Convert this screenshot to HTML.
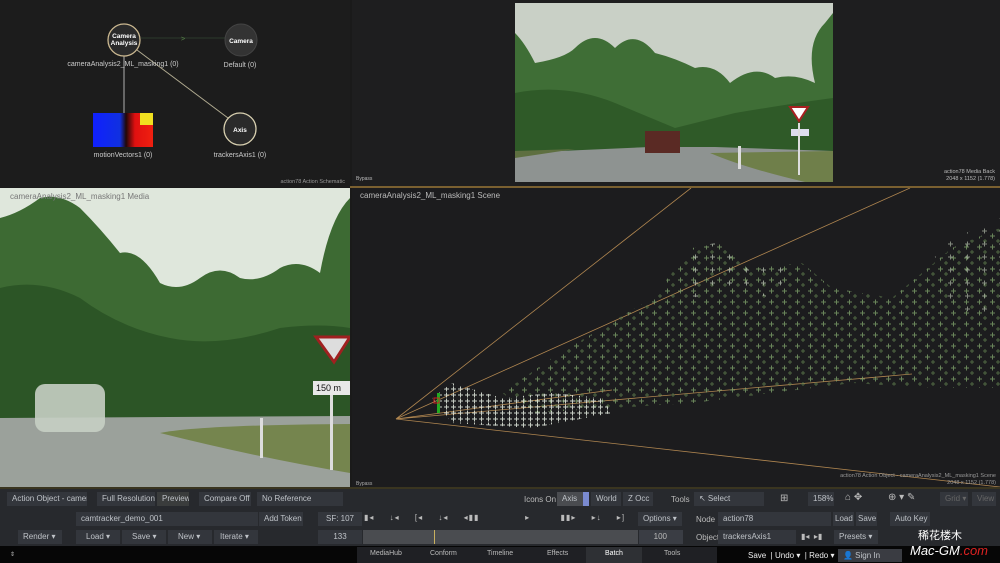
<!DOCTYPE html>
<html><head><meta charset="utf-8"><style>
*{margin:0;padding:0;box-sizing:border-box}
body{width:1000px;height:563px;background:#1a1a1a;overflow:hidden;position:relative;font-family:"Liberation Sans",sans-serif;font-size:8px;color:#c8c8c8}
.a{position:absolute}
.btn{position:absolute;background:#33363c;color:#bfc3c8;font-size:8px;line-height:14px;height:14px;padding-left:5px;white-space:nowrap;overflow:hidden}
.lbl{position:absolute;color:#bbb;font-size:8px;white-space:nowrap}
</style></head><body>
<!-- schematic -->
<div class="a" style="left:0;top:0;width:350px;height:187px;background:#1c1c1c"></div>
<svg class="a" style="left:0;top:0" width="350" height="187">
<line x1="141" y1="38" x2="225" y2="38" stroke="#2c3a2c" stroke-width="1"/>
<text x="181" y="41" fill="#5a8a4a" font-size="7" font-family="Liberation Sans">&gt;</text>
<line x1="124" y1="55" x2="124" y2="113" stroke="#999" stroke-width="1.2"/>
<line x1="137" y1="50" x2="228" y2="118" stroke="#b0aa90" stroke-width="1"/>
<circle cx="124" cy="40" r="16" fill="#2a2a2a" stroke="#cbb890" stroke-width="1.3"/>
<text x="124" y="38" fill="#fff" font-size="6.5" font-weight="bold" text-anchor="middle" font-family="Liberation Sans">Camera</text>
<text x="124" y="45" fill="#fff" font-size="6.5" font-weight="bold" text-anchor="middle" font-family="Liberation Sans">Analysis</text>
<circle cx="241" cy="40" r="16" fill="#333" stroke="#444" stroke-width="1"/>
<text x="241" y="43" fill="#fff" font-size="6.5" font-weight="bold" text-anchor="middle" font-family="Liberation Sans">Camera</text>
<circle cx="240" cy="129" r="16" fill="#2a2a2a" stroke="#d8d0b0" stroke-width="1.3"/>
<text x="240" y="132" fill="#fff" font-size="6.5" font-weight="bold" text-anchor="middle" font-family="Liberation Sans">Axis</text>
<defs><linearGradient id="mv" x1="0" x2="1"><stop offset="0" stop-color="#1020ff"/><stop offset=".45" stop-color="#1030e0"/><stop offset=".55" stop-color="#200808"/><stop offset=".7" stop-color="#e01010"/><stop offset="1" stop-color="#f02010"/></linearGradient></defs>
<rect x="93" y="113" width="60" height="34" fill="url(#mv)"/>
<rect x="140" y="113" width="13" height="12" fill="#f0e020"/>
<text x="123" y="66" fill="#ccc" font-size="7" text-anchor="middle" font-family="Liberation Sans">cameraAnalysis2_ML_masking1 (0)</text>
<text x="240" y="67" fill="#ccc" font-size="7" text-anchor="middle" font-family="Liberation Sans">Default (0)</text>
<text x="123" y="157" fill="#ccc" font-size="7" text-anchor="middle" font-family="Liberation Sans">motionVectors1 (0)</text>
<text x="240" y="157" fill="#ccc" font-size="7" text-anchor="middle" font-family="Liberation Sans">trackersAxis1 (0)</text>
<text x="345" y="183" fill="#999" font-size="5.5" text-anchor="end" font-family="Liberation Sans">action78 Action Schematic</text>
</svg>
<!-- top right -->
<div class="a" style="left:352px;top:0;width:648px;height:187px;background:#1e1e1f"></div>
<svg class="a" style="left:515px;top:3px" width="318" height="179">
<rect width="318" height="179" fill="#c9d0c6"/>
<path d="M0 30 Q10 40 20 60 Q50 55 60 45 Q80 25 100 45 Q120 25 140 50 Q160 55 180 65 Q200 60 215 80 Q240 60 260 75 Q280 70 300 80 Q290 40 310 20 L318 10 L318 150 L0 150Z" fill="#3f6e36"/>
<path d="M0 90 Q50 80 100 100 L160 125 L220 110 Q280 100 318 95 L318 150 L0 150Z" fill="#2f5a28"/>
<path d="M0 150 L135 144 L200 144 L318 148 L318 179 L0 179Z" fill="#8e9391"/>
<path d="M195 150 L318 148 L318 179 L290 179 Q230 165 195 150Z" fill="#6f7f4a"/>
<path d="M0 148 L60 146 L0 155Z" fill="#5e6f40"/>
<rect x="130" y="128" width="35" height="22" fill="#5a2a24"/>
<polygon points="275,104 293,104 284,118" fill="#fff" stroke="#a82020" stroke-width="2"/>
<rect x="276" y="126" width="18" height="7" fill="#dde"/>
<rect x="283" y="120" width="2" height="52" fill="#ddd"/>
<rect x="223" y="143" width="3" height="23" fill="#ddd"/>
</svg>
<div class="lbl" style="left:356px;top:176px;font-size:5px">Bypass</div>
<div class="lbl" style="right:5px;top:169px;font-size:5.5px;text-align:right;line-height:7px">action78 Media Back<br>2048 x 1152 (1.778)</div>
<!-- bottom left media -->
<svg class="a" style="left:0;top:188px" width="350" height="299">
<rect width="350" height="299" fill="#dfe7dc"/>
<path d="M0 30 Q20 25 40 10 Q60 5 80 20 Q100 40 120 65 Q140 60 160 95 Q180 105 200 90 Q220 75 240 90 Q260 95 280 80 Q300 70 320 85 Q330 30 350 10 L350 235 L0 235Z" fill="#3d6a33"/>
<path d="M0 100 Q40 90 80 110 Q120 140 170 150 Q220 160 280 140 Q320 135 350 140 L350 235 L0 235Z" fill="#2c5526"/>
<path d="M0 230 L350 228 L350 299 L0 299Z" fill="#9ba19b"/>
<path d="M160 245 Q200 237 350 236 L350 285 Q260 270 160 245Z" fill="#75854e"/>
<rect x="35" y="196" width="70" height="48" rx="10" fill="#c6cfc4" opacity=".9"/>
<polygon points="316,149 350,149 334,174" fill="#ddd" stroke="#a02020" stroke-width="3"/>
<rect x="313" y="193" width="37" height="14" fill="#e8e8e8"/>
<text x="316" y="203" font-size="9" font-family="Liberation Sans" fill="#111">150 m</text>
<rect x="330" y="207" width="3" height="75" fill="#ddd"/>
<rect x="260" y="230" width="3" height="40" fill="#ddd"/>
</svg>
<div class="lbl" style="left:10px;top:192px;font-size:8px;color:#777">cameraAnalysis2_ML_masking1 Media</div>
<!-- scene -->
<div class="a" style="left:352px;top:188px;width:648px;height:299px;background:#1c1c1e"></div>
<svg class="a" style="left:352px;top:188px" width="648" height="299">
<defs>
<pattern id="pc" width="13" height="11" patternUnits="userSpaceOnUse"><path d="M1 4h5M3.5 1.5v5" stroke="#7ea06a" stroke-width="1"/><path d="M7 9h4M9 7v4" stroke="#5d7a4c" stroke-width="1"/></pattern>
<pattern id="pb" width="17" height="13" patternUnits="userSpaceOnUse"><path d="M1 4h5M3.5 1.5v5" stroke="#c8d4c0" stroke-width="1"/></pattern>
<pattern id="pw" width="7" height="6" patternUnits="userSpaceOnUse"><path d="M1 3h5M3.5 0.5v5" stroke="#e8efe4" stroke-width="1"/></pattern>
</defs>
<path d="M44 231 L339 0 M44 231 L558 0 M44 231 L560 186 M44 231 L260 202 M44 231 L648 299" stroke="#b08650" stroke-width="0.8" fill="none"/>
<path d="M150 205 L200 170 L300 110 L340 60 L370 55 L400 80 L450 75 L480 100 L540 110 L600 60 L648 40 L648 200 L580 200 L500 195 L420 205 L340 215 L260 220 L180 225Z" fill="url(#pc)" opacity=".8"/>
<path d="M330 90 L345 58 L365 55 L400 78 L440 80 L420 110 L380 100 L340 110Z" fill="url(#pb)" opacity=".7"/>
<path d="M580 60 L648 30 L648 130 L600 120Z" fill="url(#pb)" opacity=".6"/>
<path d="M80 210 L100 195 L150 210 L200 205 L250 210 L260 225 L180 240 L100 235Z" fill="url(#pw)" opacity=".85"/>
<rect x="85" y="205" width="3" height="20" fill="#2a2"/>
<rect x="82" y="210" width="5" height="5" fill="none" stroke="#c22"/>
<text x="8" y="10" fill="#bbb" font-size="8" font-family="Liberation Sans">cameraAnalysis2_ML_masking1 Scene</text>
<text x="4" y="297" fill="#aaa" font-size="5" font-family="Liberation Sans">Bypass</text>
<text x="644" y="289" fill="#999" font-size="5.5" text-anchor="end" font-family="Liberation Sans">action78 Action Object - cameraAnalysis2_ML_masking1 Scene</text>
<text x="644" y="296" fill="#999" font-size="5.5" text-anchor="end" font-family="Liberation Sans">2048 x 1152 (1.778)</text>
</svg>
<div class="a" style="left:350px;top:186px;width:650px;height:2px;background:#7a6030"></div>
<!-- toolbar -->
<div class="a" style="left:0;top:489px;width:1000px;height:57px;background:#27292d"></div>
<div class="a" style="left:0;top:487px;width:1000px;height:2px;background:#3a3520"></div>
<div class="btn" style="left:7px;top:492px;width:80px">Action Object - cameraA</div>
<div class="btn" style="left:97px;top:492px;width:58px">Full Resolution</div>
<div class="btn" style="left:157px;top:492px;width:32px;background:#3a3c3c">Preview</div>
<div class="btn" style="left:199px;top:492px;width:52px">Compare Off</div>
<div class="btn" style="left:257px;top:492px;width:86px">No Reference</div>
<div class="lbl" style="left:524px;top:495px">Icons On</div>
<div class="btn" style="left:557px;top:492px;width:32px;background:#4a4c50">Axis</div>
<div class="a" style="left:583px;top:492px;width:6px;height:14px;background:#7a8ad0"></div>
<div class="btn" style="left:591px;top:492px;width:30px">World</div>
<div class="btn" style="left:623px;top:492px;width:30px">Z Occ</div>
<div class="lbl" style="left:671px;top:495px">Tools</div>
<div class="btn" style="left:694px;top:492px;width:70px">↖ Select</div>
<div class="lbl" style="left:780px;top:493px;font-size:10px">⊞</div>
<div class="btn" style="left:808px;top:492px;width:26px">158%</div>
<div class="lbl" style="left:845px;top:492px;font-size:10px">⌂ ✥</div>
<div class="lbl" style="left:888px;top:492px;font-size:10px">⊕ ▾ ✎</div>
<div class="btn" style="left:940px;top:492px;width:28px;color:#666">Grid ▾</div>
<div class="btn" style="left:972px;top:492px;width:24px;color:#666">View</div>
<div class="btn" style="left:76px;top:512px;width:182px">camtracker_demo_001</div>
<div class="btn" style="left:259px;top:512px;width:44px">Add Token ▾</div>
<div class="btn" style="left:18px;top:530px;width:44px">Render ▾</div>
<div class="btn" style="left:76px;top:530px;width:44px;padding-left:10px">Load ▾</div>
<div class="btn" style="left:122px;top:530px;width:44px;padding-left:10px">Save ▾</div>
<div class="btn" style="left:168px;top:530px;width:44px;padding-left:10px">New ▾</div>
<div class="btn" style="left:214px;top:530px;width:44px;padding-left:6px">Iterate ▾</div>
<div class="btn" style="left:318px;top:512px;width:44px;text-align:center;padding:0">SF: 107</div>
<div class="btn" style="left:318px;top:530px;width:44px;text-align:center;padding:0">133</div>
<div class="a" style="left:363px;top:530px;width:275px;height:14px;background:#4a4c50"></div>
<div class="a" style="left:434px;top:530px;width:1px;height:14px;background:#c8b060"></div>
<div class="a" style="left:639px;top:530px;width:44px;height:14px;background:#3a3d44;color:#bbb;text-align:right;padding-right:16px;line-height:14px">100</div>
<div class="lbl" style="left:364px;top:513px;font-size:8px;letter-spacing:1px;word-spacing:12px">▮◂ ↓◂ [◂ ↓◂ ◂▮▮ &nbsp;&nbsp;▸ &nbsp;▮▮▸ ▸↓ ▸] ▸↓ ▸▮▮</div>
<div class="btn" style="left:638px;top:512px;width:44px">Options ▾</div>
<div class="lbl" style="left:696px;top:515px">Node</div>
<div class="btn" style="left:718px;top:512px;width:113px">action78</div>
<div class="btn" style="left:833px;top:512px;width:21px;padding-left:2px">Load</div>
<div class="btn" style="left:856px;top:512px;width:21px;padding-left:2px">Save</div>
<div class="btn" style="left:890px;top:512px;width:40px">Auto Key</div>
<div class="lbl" style="left:696px;top:533px">Object</div>
<div class="btn" style="left:718px;top:530px;width:78px">trackersAxis1</div>
<div class="lbl" style="left:801px;top:532px">▮◂ &nbsp;▸▮</div>
<div class="btn" style="left:834px;top:530px;width:44px">Presets ▾</div>
<!-- bottom bar -->
<div class="a" style="left:0;top:546px;width:1000px;height:17px;background:#060606"></div>
<div class="lbl" style="left:10px;top:551px;font-size:6px">⇕</div>
<div class="a" style="left:357px;top:547px;width:360px;height:16px;background:#1f2024"></div>
<div class="lbl" style="left:370px;top:550px;font-size:7px">MediaHub</div>
<div class="lbl" style="left:430px;top:550px;font-size:7px">Conform</div>
<div class="lbl" style="left:487px;top:550px;font-size:7px">Timeline</div>
<div class="lbl" style="left:547px;top:550px;font-size:7px">Effects</div>
<div class="a" style="left:586px;top:547px;width:56px;height:16px;background:#2e3034"></div>
<div class="lbl" style="left:605px;top:550px;font-size:7px;color:#fff">Batch</div>
<div class="lbl" style="left:664px;top:550px;font-size:7px">Tools</div>
<div class="lbl" style="left:748px;top:551px;color:#eee">Save &nbsp;| Undo ▾ &nbsp;| Redo ▾</div>
<div class="btn" style="left:838px;top:549px;width:64px;height:13px;line-height:13px;background:#3a3c42">👤 Sign In</div>
<div class="lbl" style="left:918px;top:527px;font-size:11px;color:#fff;font-family:'Liberation Sans','Noto Sans CJK SC',sans-serif">稀花楼木</div>
<div class="lbl" style="left:910px;top:543px;font-size:13px;color:#fff;font-style:italic">Mac-GM<span style="color:#d22">.com</span></div>
</body></html>
